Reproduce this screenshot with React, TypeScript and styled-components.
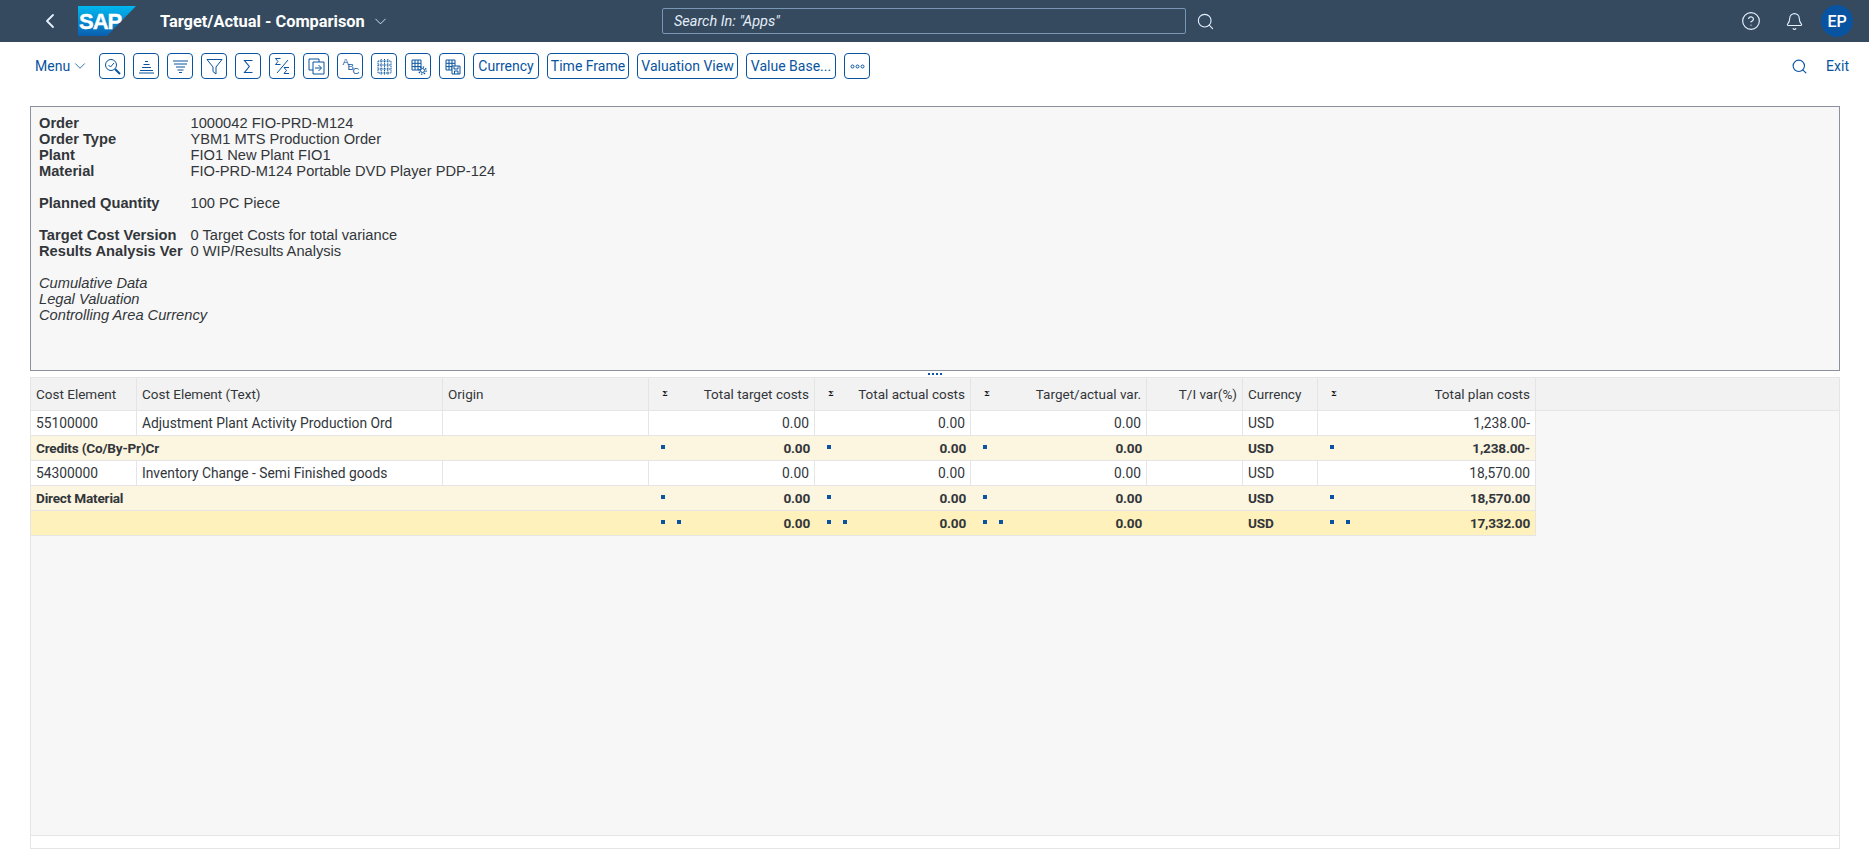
import React from 'react'
import styled, { createGlobalStyle } from 'styled-components'
import { ChevronLeft, ChevronDown, Search, CircleHelp, Bell } from 'lucide-react'

const GlobalStyle = createGlobalStyle`
  html, body {
    margin: 0;
    padding: 0;
    background: #fff;
    font-family: Roboto, "Liberation Sans", sans-serif;
    color: #32363a;
  }
  * { box-sizing: border-box; }
`

const COLUMNS = '106px 306px 206px 166px 156px 176px 96px 75px 218px'

const Page = styled.div`
  width: 1869px;
  height: 868px;
  overflow: hidden;
  display: flex;
  flex-direction: column;
`

/* shell bar */
const Shell = styled.header`
  height: 42px;
  background: #354a5f;
  display: flex;
  align-items: center;
  color: #fff;
  padding: 0 16px 0 38px;
  flex: none;
`

const ShellBack = styled.span`
  display: flex;
  width: 40px;
  color: #e4f1ff;
`

const Title = styled.span`
  font-size: 16.4px;
  font-weight: 700;
  margin-left: 24px;
  width: 206px;
  white-space: nowrap;
`

const TitleCaret = styled.span`
  display: flex;
  margin-left: 5px;
  color: #e4f1ff;
`

const SearchBox = styled.div`
  width: 524px;
  height: 26px;
  margin-left: 272px;
  border: 1px solid #7996b4;
  border-radius: 2px;
  padding: 0 11px;
  display: flex;
  align-items: center;
  font-size: 14.5px;
  font-style: italic;
  color: #e4eef8;
`

const ShellSearch = styled.span`
  display: flex;
  margin-left: 10px;
  color: #e4f1ff;
`

const ShellRight = styled.div`
  margin-left: auto;
  display: flex;
  align-items: center;
`

const ShellIcon = styled.span<{ $gap: number }>`
  display: flex;
  color: #e4f1ff;
  margin-right: ${p => p.$gap}px;
`

const Avatar = styled.span`
  width: 32px;
  height: 32px;
  border-radius: 50%;
  background: #0854a0;
  color: #fff;
  font-size: 16px;
  font-weight: 500;
  display: flex;
  align-items: center;
  justify-content: center;
`

/* toolbar */
const Toolbar = styled.div`
  display: flex;
  align-items: center;
  height: 26px;
  margin-top: 11px;
  padding: 0 20px 0 35px;
  gap: 8px;
  flex: none;
`

const MenuLabel = styled.span`
  display: flex;
  align-items: center;
  gap: 1px;
  width: 56px;
  font-size: 14px;
  color: #0854a0;
`

const ToolButton = styled.button<{ $w?: number }>`
  height: 26px;
  width: ${p => (p.$w ? `${p.$w}px` : 'auto')};
  padding: 0;
  background: #fff;
  border: 1px solid #0854a0;
  border-radius: 4px;
  color: #0854a0;
  font: 400 14px Roboto, "Liberation Sans", sans-serif;
  white-space: nowrap;
  display: flex;
  align-items: center;
  justify-content: center;
`

const ToolbarRight = styled.div`
  margin-left: auto;
  display: flex;
  align-items: center;
  color: #0854a0;
  font-size: 14px;
  gap: 18px;
`

/* info panel */
const InfoPanel = styled.section`
  margin: 27px 29px 0 30px;
  height: 265px;
  padding: 8px 8px;
  background: #f7f7f7;
  border: 1px solid #89919a;
  font-family: "Liberation Sans", Arial, sans-serif;
  font-size: 14.67px;
  line-height: 16px;
  flex: none;
`

const InfoRow = styled.div<{ $gap?: boolean }>`
  display: grid;
  grid-template-columns: 151.5px 1fr;
  min-height: 16px;
  margin-top: ${p => (p.$gap ? '16px' : '0')};
  white-space: nowrap;
`

const InfoLabel = styled.span`
  font-weight: 700;
`

const InfoNote = styled.div`
  font-style: italic;
`

const Splitter = styled.div`
  height: 6px;
  display: flex;
  justify-content: center;
  align-items: center;
  gap: 2px;
  padding-left: 1px;
  flex: none;
`

const SplitDot = styled.i`
  width: 2px;
  height: 2px;
  background: #0854a0;
`

/* table */
const Grid = styled.section`
  margin: 0 29px 0 30px;
  height: 472px;
  border: 1px solid #e5e5e5;
  background: #f7f7f7;
  display: flex;
  flex-direction: column;
  flex: none;
`

const HeadRow = styled.div`
  display: grid;
  grid-template-columns: ${COLUMNS} 1fr;
  height: 33px;
  background: #f2f2f2;
  border-bottom: 1px solid #e5e5e5;
  font-size: 13.5px;
  flex: none;
`

const Row = styled.div<{ $kind: 'plain' | 'group' | 'total' }>`
  display: grid;
  grid-template-columns: ${COLUMNS};
  width: 1505px;
  height: 25px;
  flex: none;
  border-bottom: 1px solid #e5e5e5;
  background: ${p =>
    p.$kind === 'plain' ? '#fff' : p.$kind === 'group' ? '#fcf5e0' : '#fef1bb'};
  font-weight: ${p => (p.$kind === 'plain' ? 400 : 700)};
  font-size: ${p => (p.$kind === 'plain' ? '13.8px' : '13.6px')};
  letter-spacing: ${p => (p.$kind === 'plain' ? '0' : '-0.2px')};
`

const Cell = styled.div<{ $right?: boolean; $line?: boolean; $span?: number }>`
  display: flex;
  align-items: center;
  justify-content: ${p => (p.$right ? 'flex-end' : 'flex-start')};
  padding: 0 5px;
  white-space: nowrap;
  overflow: hidden;
  grid-column: ${p => (p.$span ? `span ${p.$span}` : 'auto')};
  border-right: ${p => (p.$line ? '1px solid #e5e5e5' : '0')};
`

const SumMark = styled.span`
  font: 700 8px "DejaVu Serif", serif;
  margin: -2px 0 0 8px;
  color: #111;
`

const Marks = styled.span`
  display: flex;
  gap: 12px;
  margin: -3px auto 0 7px;
`

const Mark = styled.i`
  width: 4px;
  height: 4px;
  background: #0854a0;
`

const GridFill = styled.div`
  flex: 1;
`

const ScrollStrip = styled.div`
  height: 13px;
  background: #fff;
  border-top: 1px solid #e5e5e5;
  flex: none;
`

const I = ({ children }: { children: React.ReactNode }) => (
  <svg width="19" height="19" viewBox="0 0 19 19" fill="none" stroke="#0854a0" strokeWidth="1">
    {children}
  </svg>
)

const gridLines = <path d="M3 3h9v10H3zM3 6.3h9M3 9.6h9M6 3v10M9 3v10" />

const stepFont = { fontSize: 9.5, fill: '#0854a0', stroke: 'none', fontFamily: 'Liberation Sans' }

const toolIcons = [
  <I key="find">
    <circle cx="8" cy="8" r="5.5" />
    <path d="M12 12l5 5" strokeWidth="2" />
    <path d="M5.5 8l2 2 3.5-4" />
  </I>,
  <I key="asc">
    <path d="M8 4.5h3M6.5 7.5h6M5 10.5h9M3 13.5h13" strokeWidth="1.1" />
    <path d="M2 16h15" strokeWidth="1" />
  </I>,
  <I key="desc">
    <path d="M2 4h15" strokeWidth="1" />
    <path d="M3 7h13M5 10h9M6.5 13h6M8 15.5h3" strokeWidth="1.1" />
  </I>,
  <I key="filter">
    <path d="M2 2.5h15l-6 7.5v7l-3-2.5V10z" />
  </I>,
  <I key="sum">
    <path d="M13.5 3.5H5.5l4.8 6-4.8 6h8" strokeWidth="1.1" />
  </I>,
  <I key="subsum">
    <path d="M7.5 1.5H2.5l2.5 3-2.5 3h5M16 10.5h-5l2.5 3-2.5 3h5" />
    <path d="M15 3L4 16" />
  </I>,
  <I key="swap">
    <path d="M12 5V2H2v11h4" />
    <path d="M6 5h11v12H6z" />
    <path d="M8 11h6M11.5 8l3 3-3 3" />
  </I>,
  <I key="abc">
    <text x="1.5" y="8" {...stepFont}>A</text>
    <text x="6.5" y="12.5" {...stepFont}>B</text>
    <text x="11.5" y="17" {...stepFont}>C</text>
  </I>,
  <I key="table">
    <path d="M3 4h13v12H3zM3 8h13M3 12h13M6.2 2v16M9.5 2v16M12.8 2v16" strokeDasharray="1.2 .6" />
  </I>,
  <I key="settings">
    {gridLines}
    <circle cx="13.5" cy="13.5" r="2" fill="#fff" />
    <circle cx="13.5" cy="13.5" r="3.6" strokeDasharray="1.4 1.4" strokeWidth="1.4" />
  </I>,
  <I key="save">
    {gridLines}
    <path d="M9 9h8v8H9z" fill="#fff" />
    <path d="M11.5 17v-3h3.5v3M11 9.5v2.5h4V9.5" />
  </I>,
]

const textButtons: [string, number][] = [
  ['Currency', 66],
  ['Time Frame', 82],
  ['Valuation View', 101],
  ['Value Base...', 90],
]

type Kind = 'plain' | 'group' | 'total'

const data: { kind: Kind; code?: string; text: string; plan: string; marks?: number }[] = [
  { kind: 'plain', code: '55100000', text: 'Adjustment Plant Activity Production Ord', plan: '1,238.00-' },
  { kind: 'group', text: 'Credits (Co/By-Pr)Cr', plan: '1,238.00-', marks: 1 },
  { kind: 'plain', code: '54300000', text: 'Inventory Change - Semi Finished goods', plan: '18,570.00' },
  { kind: 'group', text: 'Direct Material', plan: '18,570.00', marks: 1 },
  { kind: 'total', text: '', plan: '17,332.00', marks: 2 },
]

const MarkCell = ({ value, marks, line }: { value: string; marks?: number; line: boolean }) => (
  <Cell $right $line={line}>
    {marks ? (
      <Marks>
        {Array.from({ length: marks }, (_, i) => (
          <Mark key={i} />
        ))}
      </Marks>
    ) : null}
    {value}
  </Cell>
)

export default function App() {
  return (
    <Page>
      <GlobalStyle />
      <Shell>
        <ShellBack>
          <ChevronLeft size={24} strokeWidth={1.8} />
        </ShellBack>
        <svg width="58" height="30" viewBox="0 0 58 30">
          <defs>
            <linearGradient id="sapBlue" x1="0" y1="0" x2="0" y2="1">
              <stop offset="0" stopColor="#00b8f1" />
              <stop offset="1" stopColor="#0a5fb0" />
            </linearGradient>
          </defs>
          <path d="M0 0h58L29 30H0z" fill="url(#sapBlue)" />
          <text x="1" y="23" fill="#fff" stroke="#fff" strokeWidth=".4" fontFamily="Liberation Sans" fontWeight="700" fontSize="22" letterSpacing="-1">
            SAP
          </text>
        </svg>
        <Title>Target/Actual - Comparison</Title>
        <TitleCaret>
          <ChevronDown size={19} strokeWidth={1.1} />
        </TitleCaret>
        <SearchBox>Search In: "Apps"</SearchBox>
        <ShellSearch>
          <Search size={19} strokeWidth={1.4} />
        </ShellSearch>
        <ShellRight>
          <ShellIcon $gap={24}>
            <CircleHelp size={20} strokeWidth={1.4} />
          </ShellIcon>
          <ShellIcon $gap={17}>
            <Bell size={19} strokeWidth={1.4} />
          </ShellIcon>
          <Avatar>EP</Avatar>
        </ShellRight>
      </Shell>

      <Toolbar>
        <MenuLabel>
          Menu
          <ChevronDown size={18} strokeWidth={1.1} />
        </MenuLabel>
        {toolIcons.map(icon => (
          <ToolButton key={icon.key} $w={26}>
            {icon}
          </ToolButton>
        ))}
        {textButtons.map(([label, w]) => (
          <ToolButton key={label} $w={w}>
            {label}
          </ToolButton>
        ))}
        <ToolButton $w={26}>
          <svg width="15" height="5" viewBox="0 0 15 5" fill="none" stroke="#0854a0">
            <circle cx="2.5" cy="2.5" r="1.5" />
            <circle cx="7.5" cy="2.5" r="1.5" />
            <circle cx="12.5" cy="2.5" r="1.5" />
          </svg>
        </ToolButton>
        <ToolbarRight>
          <Search size={17} strokeWidth={1.6} />
          Exit
        </ToolbarRight>
      </Toolbar>

      <InfoPanel>
        <InfoRow><InfoLabel>Order</InfoLabel><span>1000042 FIO-PRD-M124</span></InfoRow>
        <InfoRow><InfoLabel>Order Type</InfoLabel><span>YBM1 MTS Production Order</span></InfoRow>
        <InfoRow><InfoLabel>Plant</InfoLabel><span>FIO1 New Plant FIO1</span></InfoRow>
        <InfoRow><InfoLabel>Material</InfoLabel><span>FIO-PRD-M124 Portable DVD Player PDP-124</span></InfoRow>
        <InfoRow $gap><InfoLabel>Planned Quantity</InfoLabel><span>100 PC Piece</span></InfoRow>
        <InfoRow $gap><InfoLabel>Target Cost Version</InfoLabel><span>0 Target Costs for total variance</span></InfoRow>
        <InfoRow><InfoLabel>Results Analysis Ver</InfoLabel><span>0 WIP/Results Analysis</span></InfoRow>
        <InfoRow $gap><InfoNote>Cumulative Data</InfoNote></InfoRow>
        <InfoRow><InfoNote>Legal Valuation</InfoNote></InfoRow>
        <InfoRow><InfoNote>Controlling Area Currency</InfoNote></InfoRow>
      </InfoPanel>

      <Splitter>
        <SplitDot /><SplitDot /><SplitDot /><SplitDot />
      </Splitter>

      <Grid>
        <HeadRow>
          <Cell $line>Cost Element</Cell>
          <Cell $line>Cost Element (Text)</Cell>
          <Cell $line>Origin</Cell>
          <Cell $line $right><SumMark>Σ</SumMark><GridFill />Total target costs</Cell>
          <Cell $line $right><SumMark>Σ</SumMark><GridFill />Total actual costs</Cell>
          <Cell $line $right><SumMark>Σ</SumMark><GridFill />Target/actual var.</Cell>
          <Cell $line $right>T/I var(%)</Cell>
          <Cell $line>Currency</Cell>
          <Cell $line $right><SumMark>Σ</SumMark><GridFill />Total plan costs</Cell>
          <Cell />
        </HeadRow>
        {data.map((r, i) => {
          const plain = r.kind === 'plain'
          return (
            <Row key={i} $kind={r.kind}>
              {plain ? (
                <>
                  <Cell $line>{r.code}</Cell>
                  <Cell $line>{r.text}</Cell>
                  <Cell $line />
                </>
              ) : (
                <Cell $span={3}>{r.text}</Cell>
              )}
              <MarkCell value="0.00" marks={r.marks} line={plain} />
              <MarkCell value="0.00" marks={r.marks} line={plain} />
              <MarkCell value="0.00" marks={r.marks} line={plain} />
              <Cell $line={plain} />
              <Cell $line={plain}>USD</Cell>
              <MarkCell value={r.plan} marks={r.marks} line />
            </Row>
          )
        })}
        <GridFill />
        <ScrollStrip />
      </Grid>
    </Page>
  )
}
